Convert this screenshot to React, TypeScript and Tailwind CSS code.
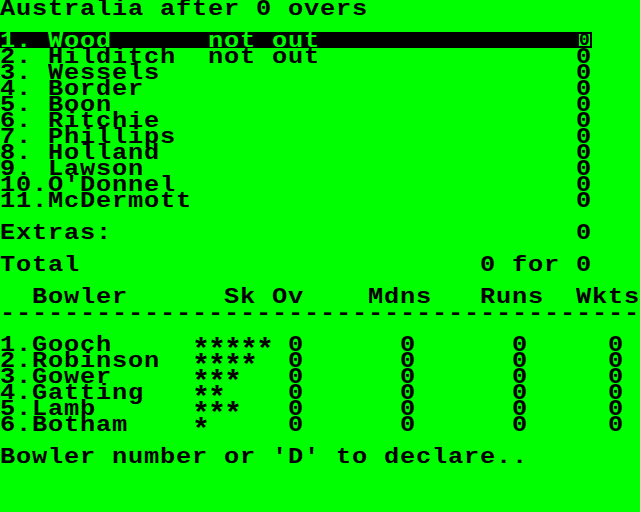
const rows: string[] = [
  "Australia after 0 overs",
  "",
  "",
  "2. Hilditch  not out                0",
  "3. Wessels                          0",
  "4. Border                           0",
  "5. Boon                             0",
  "6. Ritchie                          0",
  "7. Phillips                         0",
  "8. Holland                          0",
  "9. Lawson                           0",
  "10.O'Donnel                         0",
  "11.McDermott                        0",
  "",
  "Extras:                             0",
  "",
  "Total                         0 for 0",
  "",
  "  Bowler      Sk Ov    Mdns   Runs  Wkts",
  "----------------------------------------",
  "",
  "1.Gooch     ***** 0      0      0     0",
  "2.Robinson  ****  0      0      0     0",
  "3.Gower     ***   0      0      0     0",
  "4.Gatting   **    0      0      0     0",
  "5.Lamb      ***   0      0      0     0",
  "6.Botham    *     0      0      0     0",
  "",
  "Bowler number or 'D' to declare..",
];

function Cell({ ch }: { ch: string }) {
  if (ch === "*") {
    return (
      <span className="inline-block w-4 h-4 shrink-0 text-left text-[30px] leading-[30px]">*</span>
    );
  }
  return (
    <span className="inline-block w-4 h-4 shrink-0 text-left leading-[20px] origin-left scale-x-[1.15]">
      {ch === " " ? "\u00a0" : ch}
    </span>
  );
}

function Line({ text }: { text: string }) {
  return (
    <div className="flex h-4 whitespace-pre">
      {text.split("").map((c, i) => (
        <Cell key={i} ch={c} />
      ))}
    </div>
  );
}

export default function App() {
  return (
    <div
      className="w-[640px] h-[512px] bg-[#00ff00] text-black font-bold text-[22px] overflow-hidden"
      style={{ fontFamily: '"Liberation Mono", "DejaVu Sans Mono", monospace' }}
    >
      {rows.slice(0, 2).map((r, i) => (
        <Line key={i} text={r} />
      ))}
      <div className="flex h-4">
        <div className="flex w-[577px] bg-black text-[#00ff00]">
          {"1. Wood      not out".split("").map((c, i) => (
            <Cell key={i} ch={c} />
          ))}
        </div>
        <span className="inline-block w-[15px] h-4 border-2 border-black bg-[#00ff00] text-black text-[18px] text-center leading-3">
          0
        </span>
      </div>
      {rows.slice(3).map((r, i) => (
        <Line key={i} text={r} />
      ))}
    </div>
  );
}
